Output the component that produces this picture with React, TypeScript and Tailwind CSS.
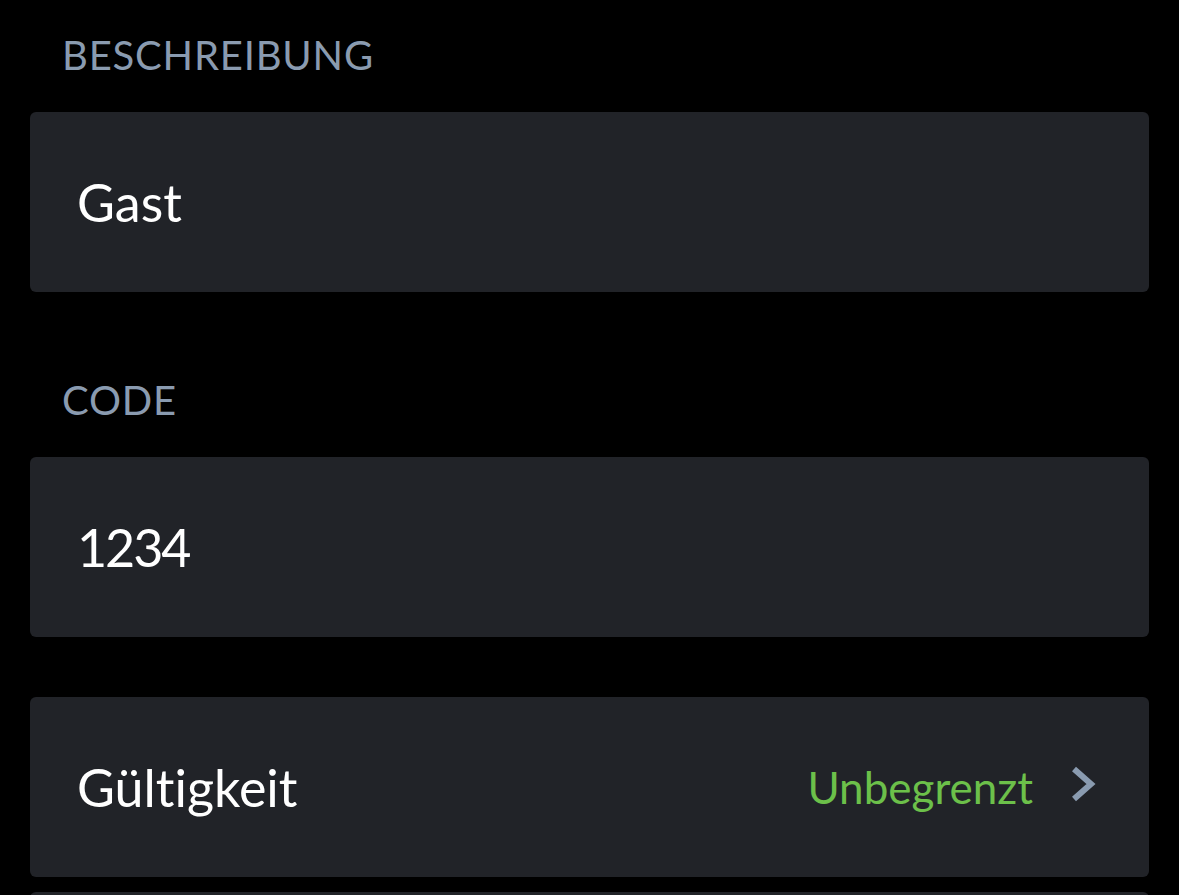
import React from 'react';

const font = { fontFamily: '"Lato", "Open Sans", sans-serif' };

function Label({ children }: { children: React.ReactNode }) {
  return (
    <div className="pl-[32px] text-[40px] leading-none tracking-[0.02em] text-[#8a9bb0]">
      {children}
    </div>
  );
}

function Field({ value, tight }: { value: string; tight?: boolean }) {
  return (
    <div className="h-[180px] rounded-[6px] bg-[#212328] flex items-center pl-[47px]">
      <span className={tight ? 'text-[52px] text-white leading-none tracking-[-0.04em]' : 'text-[52px] text-white leading-none'}>
        {value}
      </span>
    </div>
  );
}

export default function App() {
  return (
    <div
      className="h-[895px] overflow-hidden bg-black px-[30px] w-[1179px] [font-variant-ligatures:none]"
      style={font}
    >
      <div className="pt-[35px]">
        <Label>BESCHREIBUNG</Label>
      </div>
      <div className="mt-[37px]">
        <Field value="Gast" />
      </div>

      <div className="mt-[88px]">
        <Label>CODE</Label>
      </div>
      <div className="mt-[37px]">
        <Field value="1234" tight />
      </div>

      {/* Gültigkeit row */}
      <div className="mt-[60px] h-[180px] rounded-[6px] bg-[#212328] flex items-center pl-[47px] pr-[52px]">
        <span className="text-[52px] text-white leading-none">Gültigkeit</span>
        <span className="ml-auto text-[44px] text-[#6cc04a] leading-none">Unbegrenzt</span>
        <svg className="ml-[36px] -mt-[6px]" width="28" height="38" viewBox="0 0 28 38" fill="none">
          <path d="M5 4 L22 19 L5 34" stroke="#8a9bb0" strokeWidth="6" strokeLinecap="butt" strokeLinejoin="miter" />
        </svg>
      </div>

      <div className="mt-[15px] h-[180px] rounded-[6px] bg-[#212328]" />
    </div>
  );
}
